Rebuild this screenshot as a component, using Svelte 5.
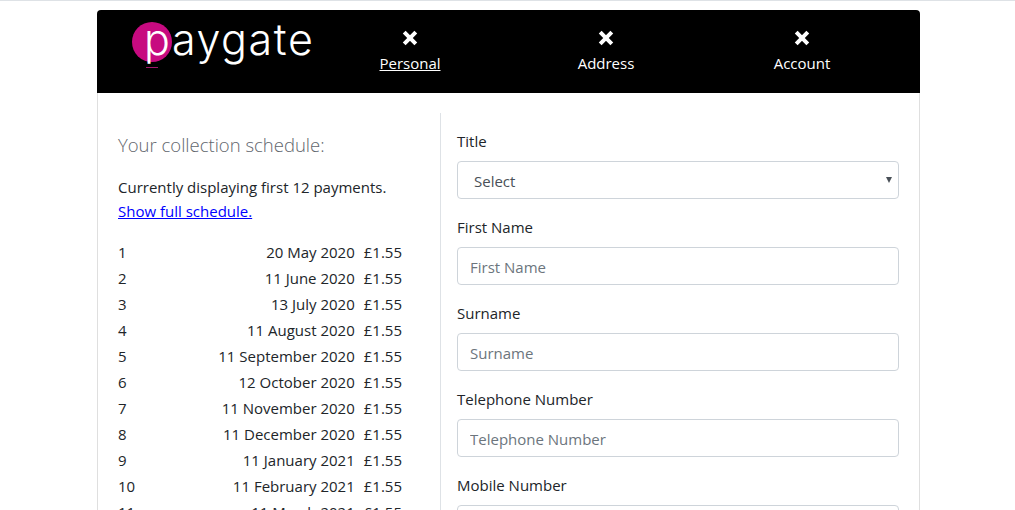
<script>
  const payments = [
    "20 May 2020",
    "11 June 2020",
    "13 July 2020",
    "11 August 2020",
    "11 September 2020",
    "12 October 2020",
    "11 November 2020",
    "11 December 2020",
    "11 January 2021",
    "11 February 2021",
    "11 March 2021",
    "12 April 2021"
  ];
  const steps = ["Personal", "Address", "Account"];
  const fields = ["First Name", "Surname", "Telephone Number", "Mobile Number"];
</script>

<div class="page">
  <div class="card">
    <header>
      <div class="logo">
        <span class="disc"></span>
        <span class="word">paygate</span>
        <span class="dash"></span>
      </div>
      <nav>
        {#each steps as step, i}
          <div class="step">
            <svg viewBox="0 0 16 16" width="16" height="16" aria-hidden="true">
              <path d="M2.2 2.2 L13.8 13.8 M13.8 2.2 L2.2 13.8" stroke="#fff" stroke-width="4" fill="none" />
            </svg>
            <span class:current={i === 0}>{step}</span>
          </div>
        {/each}
      </nav>
    </header>

    <div class="body">
      <section class="schedule">
        <h2>Your collection schedule:</h2>
        <p>Currently displaying first 12 payments.<br /><a href="#full">Show full schedule.</a></p>
        <table>
          <tbody>
            {#each payments as date, i}
              <tr>
                <td class="num">{i + 1}</td>
                <td class="date">{date}</td>
                <td class="amount">£1.55</td>
              </tr>
            {/each}
          </tbody>
        </table>
      </section>

      <form>
        <div class="field">
          <label for="title">Title</label>
          <div class="select" id="title">
            <span>Select</span>
            <svg viewBox="0 0 6 6" width="6" height="6" aria-hidden="true"><path d="M0 0 H6 L3 6 Z" fill="#495057" /></svg>
          </div>
        </div>
        {#each fields as field}
          <div class="field">
            <label for={field}>{field}</label>
            <input id={field} placeholder={field} />
          </div>
        {/each}
      </form>
    </div>
  </div>
</div>

<style>
  :global(html), :global(body) {
    height: 510px;
    overflow: hidden;
  }

  .page {
    border-top: 1px solid #dee2e6;
    padding: 9px 95px 0 97px;
    font-family: "Open Sans", "Noto Sans", sans-serif;
    font-size: 15px;
    line-height: 24px;
    color: #212529;
  }

  header {
    display: flex;
    background: #000;
    height: 83px;
    border-radius: 4px 4px 0 0;
    color: #fff;
  }

  .logo {
    position: relative;
    width: 215px;
    flex: none;
  }

  .disc {
    position: absolute;
    left: 35px;
    top: 12px;
    width: 40px;
    height: 40px;
    border-radius: 50%;
    background: #c70a80;
  }

  .word {
    position: relative;
    display: block;
    margin: 4px 0 0 47px;
    font-family: Inter, sans-serif;
    font-weight: 300;
    font-size: 43px;
    letter-spacing: 1.6px;
    line-height: 50px;
  }

  .dash {
    position: absolute;
    left: 49px;
    top: 57px;
    width: 12px;
    height: 1px;
    background: #a0186c;
  }

  nav {
    display: flex;
  }

  .step {
    width: 196px;
    display: flex;
    flex-direction: column;
    align-items: center;
    padding-top: 20px;
  }

  .step span {
    margin-top: 5px;
  }

  .current {
    text-decoration: underline;
  }

  .body {
    display: flex;
    padding: 20px;
    background: #fff;
    border: 1px solid #dfdfdf;
    border-top: 0;
  }

  .schedule {
    width: 322px;
    flex: none;
    box-sizing: border-box;
  }

  h2 {
    margin: 20px 0 0;
    font-size: 18.5px;
    line-height: 24px;
    font-weight: 300;
    color: #5f666d;
  }

  p {
    margin: 18px 0 16px;
  }

  a {
    color: #00f;
  }

  table {
    width: 284px;
    border-collapse: collapse;
  }

  td {
    padding: 0;
    height: 26px;
  }

  .date {
    text-align: right;
  }

  .amount {
    width: 38px;
    padding-left: 9px;
    white-space: nowrap;
  }

  form {
    flex: 1;
    border-left: 1px solid #dee2e6;
    padding: 16px 0 0 16px;
  }

  .field {
    margin-bottom: 16px;
  }

  label {
    display: block;
    margin-bottom: 8px;
  }

  input,
  .select {
    display: flex;
    align-items: center;
    width: 100%;
    height: 38px;
    box-sizing: border-box;
    border: 1px solid #ced4da;
    border-radius: 4px;
    padding: 2px 12px 0;
    font: inherit;
    color: #495057;
    background: #fff;
  }

  input::placeholder {
    color: #6c757d;
    opacity: 1;
  }

  .select {
    justify-content: space-between;
    padding: 2px 6px 0 16px;
  }

  .select svg {
    margin-bottom: 2px;
  }
</style>
